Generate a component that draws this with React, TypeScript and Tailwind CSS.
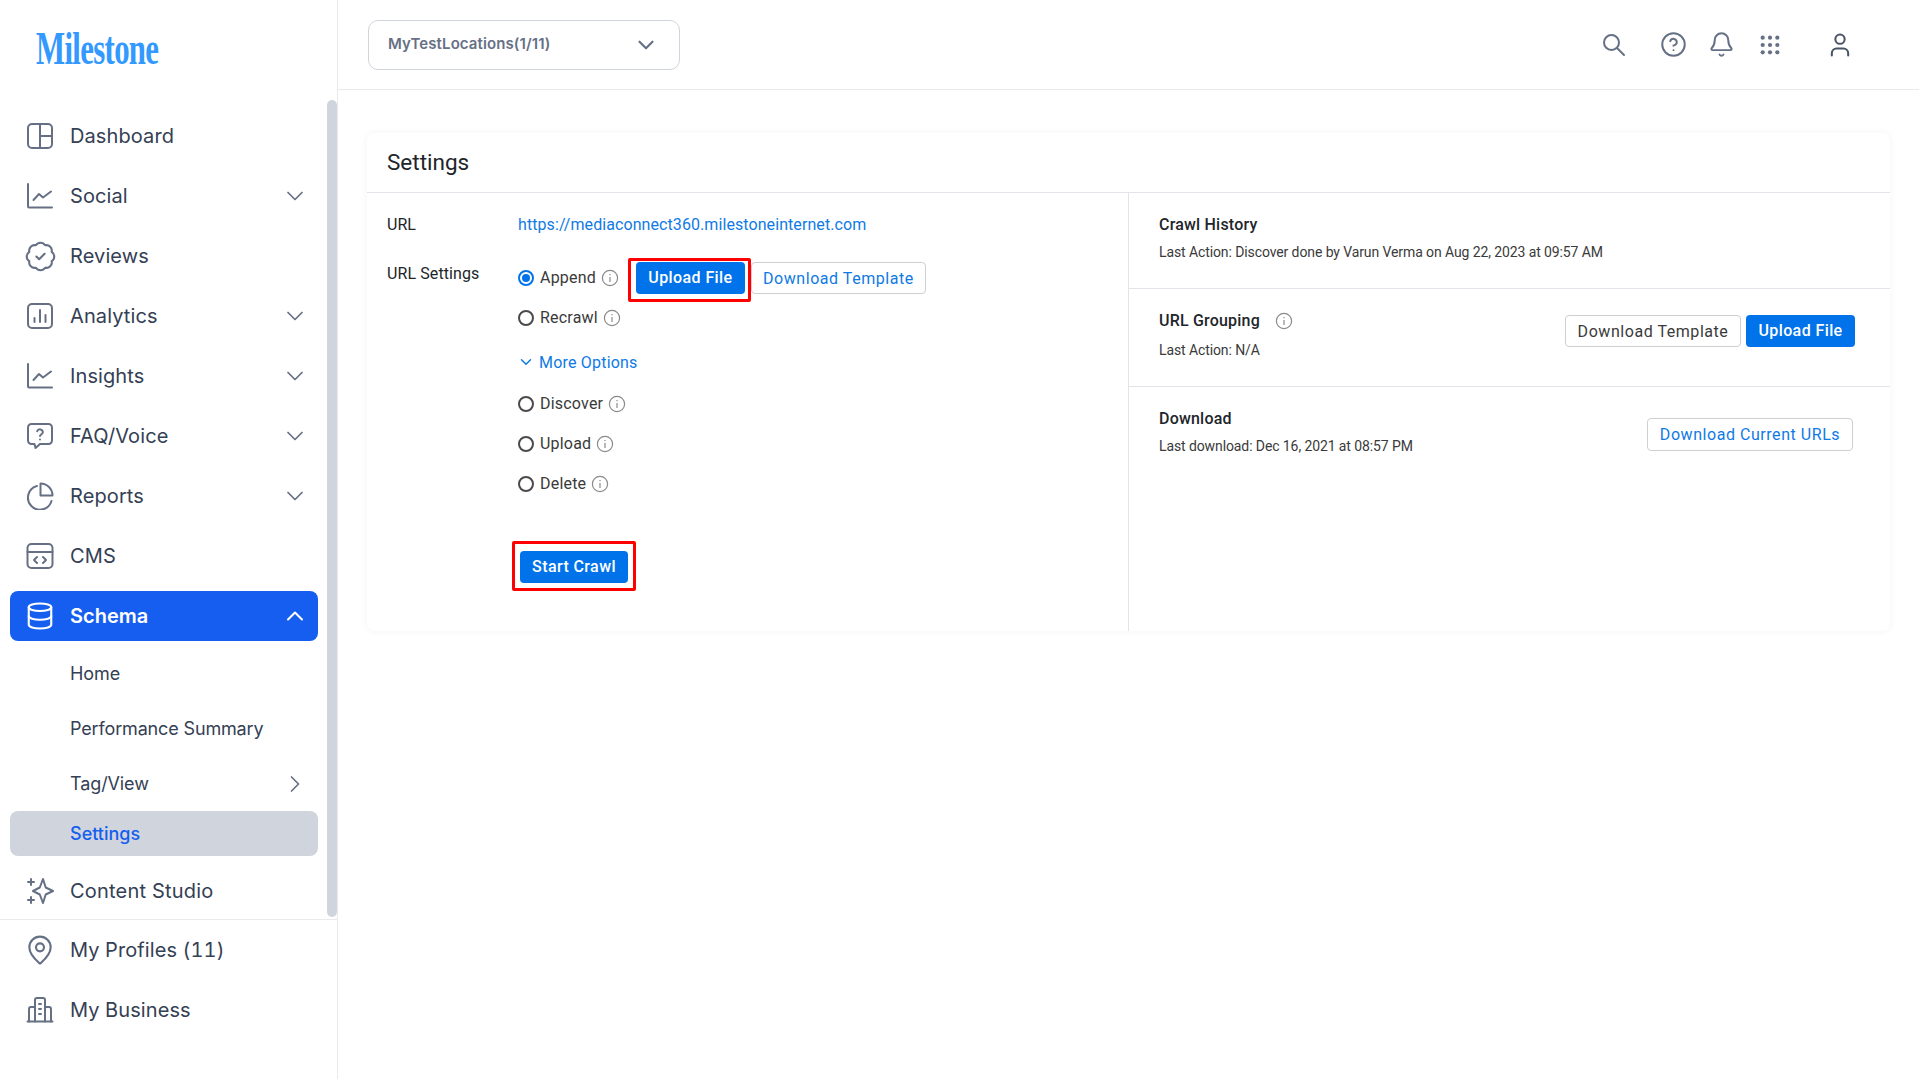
import type { ReactNode } from "react";
import {
  BadgeCheck,
  Bell,
  ChevronDown,
  ChevronRight,
  ChevronUp,
  CircleHelp,
  Database,
  MapPin,
  User,
} from "lucide-react";

function Glyph({ children }: { children: ReactNode }) {
  return (
    <svg
      width="28"
      height="28"
      viewBox="0 0 28 28"
      fill="none"
      stroke="currentColor"
      strokeWidth="2"
      strokeLinecap="round"
      strokeLinejoin="round"
    >
      {children}
    </svg>
  );
}

const DashboardIcon = () => (
  <Glyph>
    <rect x="2" y="2" width="24" height="24" rx="4" />
    <path d="M14 2v24M14 14h12" />
  </Glyph>
);

const ChartIcon = () => (
  <Glyph>
    <path d="M2 2v22.5a1 1 0 0 0 1 1h23" />
    <path d="M7.5 18l5.5-6 4 3.5 8-6" />
  </Glyph>
);

const BarsIcon = () => (
  <Glyph>
    <rect x="2" y="2" width="24" height="24" rx="4" />
    <path d="M8.5 20v-4M14 20V8M19.5 20v-7" />
  </Glyph>
);

const FaqIcon = () => (
  <Glyph>
    <path d="M5.5 2h17A3.5 3.5 0 0 1 26 5.5v13a3.5 3.5 0 0 1-3.5 3.5H14l-4.5 4-1-4h-3A3.5 3.5 0 0 1 2 18.5v-13A3.5 3.5 0 0 1 5.5 2z" />
    <path d="M11.2 9.2a2.9 2.9 0 0 1 5.6 1c0 2-2.8 2.4-2.8 3.8" />
    <path d="M14 17.4v.1" />
  </Glyph>
);

const PieIcon = () => (
  <Glyph>
    <path d="M11 4A12 12 0 1 0 25.5 19" />
    <path d="M14.5 1.5a12 12 0 0 1 12 12h-12z" />
  </Glyph>
);

const CmsIcon = () => (
  <Glyph>
    <rect x="1.5" y="2" width="25" height="24" rx="4" />
    <path d="M1.5 10h25M11 15l-3 3 3 3M17 15l3 3-3 3" />
  </Glyph>
);

const SparkleIcon = () => (
  <Glyph>
    <path d="M17 2l2.7 8.5 7.3 3.5-7.3 3.5L17 26l-3.2-8.5L7 14l6.8-3.5z" />
    <path d="M5 2v6M2 5h6M5 20v6M2 23h6" />
  </Glyph>
);

const BuildingIcon = () => (
  <Glyph>
    <path d="M1.5 25.5h25" />
    <path d="M9 25.5V4a2 2 0 0 1 2-2h6a2 2 0 0 1 2 2v21.5" />
    <path d="M3 25.5V13a2 2 0 0 1 2-2h4M25 25.5V13a2 2 0 0 0-2-2h-4" />
    <path d="M13 8h2M13 13h2M13 18h2" />
  </Glyph>
);

function NavItem({
  icon,
  label,
  chevron,
}: {
  icon: ReactNode;
  label: string;
  chevron?: boolean;
}) {
  return (
    <div className="flex h-[60px] items-center px-[16px] text-[#344054]">
      <span className="flex w-[28px] justify-center text-[#667085]">{icon}</span>
      <span className="ml-[16px] text-[20px] tracking-[0.1px] tabular-nums">{label}</span>
      {chevron && (
        <ChevronDown size={28} strokeWidth={1.5} className="ml-auto -mr-[7px] text-[#667085]" />
      )}
    </div>
  );
}

function InfoIcon() {
  return (
    <svg width="18" height="18" viewBox="0 0 18 18" fill="none" stroke="#8a8a8a" strokeWidth="1.2">
      <circle cx="9" cy="9" r="7.6" />
      <path d="M9 8v5" />
      <path d="M9 5v1.2" />
    </svg>
  );
}

function RadioRow({ label, checked }: { label: string; checked?: boolean }) {
  return (
    <>
      {checked ? (
        <span className="flex h-[16px] w-[16px] items-center justify-center rounded-full border-2 border-[#0073ea]">
          <span className="h-[8px] w-[8px] rounded-full bg-[#0073ea]" />
        </span>
      ) : (
        <span className="h-[16px] w-[16px] rounded-full border-2 border-[#4a4a4a]" />
      )}
      <span className="ml-[6px] mr-[5px] text-[16px] tracking-[0.2px] text-[#3a3a3a]">{label}</span>
      <InfoIcon />
    </>
  );
}

export default function App() {
  return (
    <div className="flex h-[1079px] overflow-hidden bg-white font-[Inter,sans-serif]">
      {/* Sidebar */}
      <aside className="flex w-[338px] shrink-0 flex-col border-r border-[#e8eaee]">
        <div className="flex h-[106px] shrink-0 items-center pl-[36px]">
          <span className="-mt-[8px] origin-left scale-x-[0.67] font-['Liberation_Serif',serif] text-[46px] font-bold leading-none tracking-[-1px] text-[#3399ff]">
            Milestone
          </span>
        </div>

        <div className="relative h-[813px] shrink-0 pl-[10px] pr-[19px]">
          <NavItem icon={<DashboardIcon />} label="Dashboard" />
          <NavItem icon={<ChartIcon />} label="Social" chevron />
          <NavItem icon={<BadgeCheck size={33} strokeWidth={1.5} className="shrink-0" />} label="Reviews" />
          <NavItem icon={<BarsIcon />} label="Analytics" chevron />
          <NavItem icon={<ChartIcon />} label="Insights" chevron />
          <NavItem icon={<FaqIcon />} label="FAQ/Voice" chevron />
          <NavItem icon={<PieIcon />} label="Reports" chevron />
          <NavItem icon={<CmsIcon />} label="CMS" />

          <div className="mt-[5px] flex h-[50px] items-center rounded-[8px] bg-[#155eef] px-[16px] font-semibold text-white">
            <span className="flex w-[28px] justify-center">
              <Database size={30} strokeWidth={1.7} className="shrink-0" />
            </span>
            <span className="ml-[16px] text-[20px]">Schema</span>
            <ChevronUp size={28} strokeWidth={1.75} className="ml-auto -mr-[7px]" />
          </div>

          <div className="mt-[5px] flex h-[55px] items-center pl-[60px] text-[18px] tracking-[-0.1px] text-[#344054]">Home</div>
          <div className="flex h-[55px] items-center pl-[60px] text-[18px] tracking-[-0.15px] text-[#344054]">Performance Summary</div>
          <div className="flex h-[55px] items-center pl-[60px] pr-[9px] text-[18px] tracking-[-0.1px] text-[#344054]">
            Tag/View
            <ChevronRight size={28} strokeWidth={1.5} className="ml-auto text-[#667085]" />
          </div>
          <div className="flex h-[45px] items-center rounded-[8px] bg-[#d0d5dd] pl-[60px] text-[18px] font-medium text-[#155eef]">
            Settings
          </div>
          <div className="mt-[6px]">
            <div className="flex h-[57px] items-center px-[16px] text-[#344054]">
              <span className="flex w-[28px] justify-center text-[#667085]">
                <SparkleIcon />
              </span>
              <span className="ml-[16px] text-[20px] tracking-[0.2px]">Content Studio</span>
            </div>
          </div>

          {/* Scrollbar thumb */}
          <div className="absolute right-0 top-[-6px] h-[817px] w-[10px] rounded-[5px] bg-[#d0d5dd]" />
        </div>

        <div className="border-t border-[#e8eaee] pl-[10px] pr-[19px]">
          <NavItem icon={<MapPin size={32} strokeWidth={1.6} className="shrink-0" />} label="My Profiles (11)" />
          <NavItem icon={<BuildingIcon />} label="My Business" />
        </div>
      </aside>

      <div className="flex min-w-0 flex-1 flex-col">
        {/* Top bar */}
        <header className="flex h-[90px] shrink-0 items-center border-b border-[#e8eaee] pl-[30px] pr-[65px] text-[#667085]">
          <div className="flex h-[50px] w-[312px] items-center justify-between rounded-[10px] border border-[#d0d5dd] pl-[19px] pr-[20px]">
            <span className="-mt-[1px] text-[15px] font-semibold tracking-[0.1px]">MyTestLocations(1/11)</span>
            <ChevronDown size={26} strokeWidth={2} />
          </div>
          <div className="ml-auto flex items-center">
            <svg width="24" height="24" viewBox="0 0 24 24" fill="none" stroke="currentColor" strokeWidth="2" strokeLinecap="round">
              <circle cx="9.5" cy="9.5" r="7.5" />
              <path d="M15 15l7 7" />
            </svg>
            <CircleHelp size={27} strokeWidth={1.75} className="ml-[34px]" />
            <Bell size={27} strokeWidth={1.75} className="ml-[21px]" />
            <svg width="28" height="28" viewBox="0 0 28 28" fill="currentColor" className="ml-[21px]">
              <circle cx="6.7" cy="6.7" r="2.1" />
              <circle cx="14" cy="6.7" r="2.1" />
              <circle cx="21.3" cy="6.7" r="2.1" />
              <circle cx="6.7" cy="14" r="2.1" />
              <circle cx="14" cy="14" r="2.1" />
              <circle cx="21.3" cy="14" r="2.1" />
              <circle cx="6.7" cy="21.3" r="2.1" />
              <circle cx="14" cy="21.3" r="2.1" />
              <circle cx="21.3" cy="21.3" r="2.1" />
            </svg>
            <User size={28} strokeWidth={1.75} className="ml-[42px] text-[#475467]" />
          </div>
        </header>

        {/* Settings card */}
        <main className="px-[29px] pt-[43px] font-[Roboto,sans-serif]">
          <section className="rounded-[8px] bg-white shadow-[0_0_8px_rgba(16,24,40,0.05)]">
            <div className="flex h-[60px] items-center border-b border-[#e3e4ea] pl-[20px]">
              <h1 className="text-[22.5px] font-normal text-[#212529]">Settings</h1>
            </div>

            <div className="flex">
              {/* Crawl form */}
              <div className="w-[762px] shrink-0 border-r border-[#e3e4ea] pb-[40px] pl-[20px] pt-[20px]">
                <div className="flex h-[24px] items-center text-[16px] text-[#212529]">
                  <span className="w-[131px]">URL</span>
                  <a className="text-[16px] tracking-[0.08px] text-[#0f7ae5]">
                    https://mediaconnect360.milestoneinternet.com
                  </a>
                </div>

                <div className="mt-[21px] flex">
                  <span className="mt-[4px] w-[131px] text-[16px] leading-[24px] tracking-[0.1px] text-[#212529]">URL Settings</span>
                  <div className="flex flex-col">
                    <div className="flex h-[40px] items-center">
                      <RadioRow label="Append" checked />
                      <div className="ml-[9px] self-start rounded-[2px] border-[3px] border-[#ff0000] pb-[5px] pl-[5px] pr-[3px] pt-[1px]">
                        <button className="flex h-[32px] w-[109px] items-center justify-center rounded-[4px] bg-[#0073ea] text-[16px] font-medium tracking-[0.4px] text-white">
                          Upload File
                        </button>
                      </div>
                      <button className="mb-[4px] flex h-[32px] w-[175px] items-center justify-center self-end rounded-[4px] border border-[#cfcfcf] pt-[1px] text-[16px] tracking-[0.55px] text-[#0f7ae5]">
                        Download Template
                      </button>
                    </div>
                    <div className="flex h-[40px] items-center">
                      <RadioRow label="Recrawl" />
                    </div>
                    <div className="mt-[5px] flex h-[40px] items-center text-[#0f7ae5]">
                      <ChevronDown size={18} strokeWidth={2} className="-ml-[1px] -mt-[2px]" />
                      <span className="ml-[4px] text-[16px] tracking-[0.2px]">More Options</span>
                    </div>
                    <div className="mt-[1px] flex h-[40px] items-center">
                      <RadioRow label="Discover" />
                    </div>
                    <div className="flex h-[40px] items-center">
                      <RadioRow label="Upload" />
                    </div>
                    <div className="flex h-[40px] items-center">
                      <RadioRow label="Delete" />
                    </div>
                    <div className="-ml-[6px] mt-[37px] w-[124px] rounded-[2px] border-[3px] border-[#ff0000] px-[5px] pb-[5px] pt-[7px]">
                      <button className="flex h-[32px] w-[108px] items-center justify-center rounded-[4px] bg-[#0073ea] text-[16px] font-medium tracking-[0.4px] text-white">
                        Start Crawl
                      </button>
                    </div>
                  </div>
                </div>
              </div>

              {/* Right column */}
              <div className="min-w-0 flex-1">
                <div className="h-[96px] border-b border-[#e3e4ea] pl-[30px] pt-[20px]">
                  <h2 className="text-[16px] font-medium leading-[24px] tracking-[0.2px] text-[#212529]">Crawl History</h2>
                  <p className="mt-[5px] text-[14px] leading-[20px] tracking-[-0.1px] text-[#3a3a3a]">
                    Last Action: Discover done by Varun Verma on Aug 22, 2023 at 09:57 AM
                  </p>
                </div>

                <div className="flex h-[98px] justify-between border-b border-[#e3e4ea] pl-[30px] pr-[35px] pt-[20px]">
                  <div>
                    <div className="flex h-[24px] items-center">
                      <h2 className="text-[16px] font-medium tracking-[0.2px] text-[#212529]">URL Grouping</h2>
                      <span className="ml-[15px]">
                        <InfoIcon />
                      </span>
                    </div>
                    <p className="mt-[7px] text-[14px] leading-[20px] tracking-[-0.1px] text-[#3a3a3a]">Last Action: N/A</p>
                  </div>
                  <div className="mt-[6px] flex h-[32px] gap-[5px]">
                    <button className="w-[176px] rounded-[4px] border border-[#cfcfcf] pt-[1px] text-[16px] tracking-[0.55px] text-[#3a3a3a]">
                      Download Template
                    </button>
                    <button className="w-[109px] rounded-[4px] bg-[#0073ea] text-[16px] font-medium tracking-[0.4px] text-white">
                      Upload File
                    </button>
                  </div>
                </div>

                <div className="flex justify-between pl-[30px] pr-[37px] pt-[20px]">
                  <div>
                    <h2 className="text-[16px] font-medium leading-[24px] tracking-[0.2px] text-[#212529]">Download</h2>
                    <p className="mt-[5px] text-[14px] leading-[20px] tracking-[-0.1px] text-[#3a3a3a]">
                      Last download: Dec 16, 2021 at 08:57 PM
                    </p>
                  </div>
                  <button className="mt-[11px] h-[33px] w-[206px] rounded-[4px] border border-[#cfcfcf] text-[16px] tracking-[0.55px] text-[#0f7ae5]">
                    Download Current URLs
                  </button>
                </div>
              </div>
            </div>
          </section>
        </main>
      </div>
    </div>
  );
}
